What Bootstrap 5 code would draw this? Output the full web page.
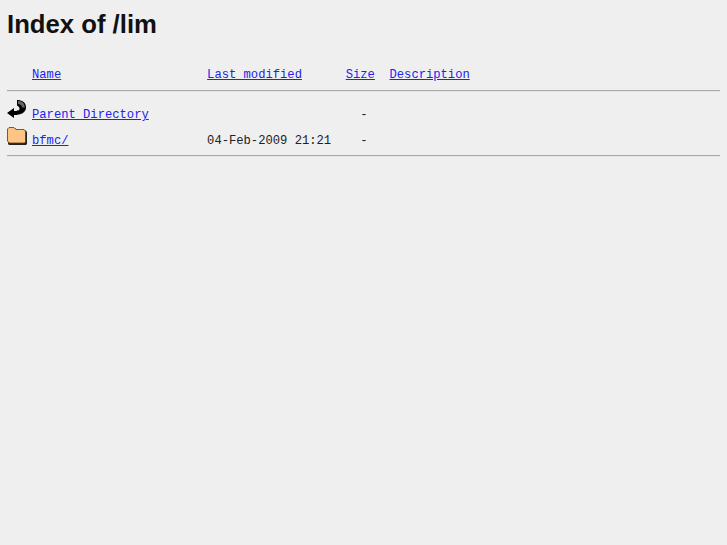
<!DOCTYPE html>
<html>
<head>
    <meta charset="utf-8" />
    <title>Index of /lim</title>
    <link href="https://cdn.jsdelivr.net/npm/bootstrap@5.3.2/dist/css/bootstrap.min.css" rel="stylesheet">
    <style>
        body { background: #efefef; color: #222; padding: 8px 7px; }
        h1 { font: bold 25.7px/32px "Liberation Sans", Arial, sans-serif; color: #111; margin: 0 0 29px; }
        .listing { font: 12.17px/13px "Liberation Mono", "Courier New", monospace; color: #222; margin: 0; overflow: visible; }
        .listing a { color: #2222ee; text-decoration: underline; }
        .listing hr { margin: 0; border: 0; border-top: 1px solid #aaa; opacity: 1; height: 2px; background: #e4e4e4; }
        .head-line { padding-bottom: 8px; padding-left: 25px; }
        .file-line { display: flex; align-items: flex-end; height: 26px; }
        .file-line svg { width: 20px; height: 20px; margin-right: 5px; margin-bottom: 3px; flex: none; }
        .file-line span { display: block; transform: translateY(-1px); }
        .first-line { margin-top: 5px; }
        .last-line { margin-bottom: 6px; }
    </style>
</head>
<body>

    <h1>Index of /lim</h1>

    <pre class="listing"><div class="head-line"><a href="#">Name</a>                    <a href="#">Last modified</a>      <a href="#">Size</a>  <a href="#">Description</a></div><hr><div class="file-line first-line"><svg viewBox="0 0 20 20"><path d="M0 13L7 8v3c3 0 5.500-.3 5.500-2.300C12.500 7 11 6 10 5.500V0c5 0 9 2 9 7.500 0 5-5 7.500-12 7.500v3z" fill="#000"/><path d="M11 1c3 0 5 1 6 3l1 3.500h-3c0-2-2-3.500-4-3.500z" fill="#666"/></svg><span><a href="#">Parent Directory</a>                             -</span></div><div class="file-line last-line"><svg viewBox="0 0 20 20"><path d="M1 4l1-2h6l2 2h8l2 2v12l-1 1H2l-1-1z" fill="#222"/><path d="M.5 15V3l1.500-1.500h5l2 2h8l1.500 1.500v11l-1 1H2z" fill="#fdc584" stroke="#5a3a18" stroke-width=".8"/></svg><span><a href="#">bfmc/</a>                   04-Feb-2009 21:21    -</span></div><hr></pre>

    <script src="https://cdn.jsdelivr.net/npm/bootstrap@5.3.2/dist/js/bootstrap.bundle.min.js"></script>
</body>
</html>
